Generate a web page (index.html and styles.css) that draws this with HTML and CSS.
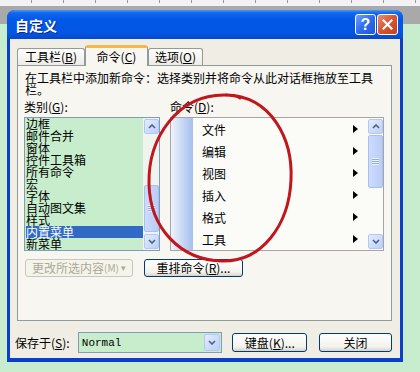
FILE: index.html
```html
<!DOCTYPE html>
<html lang="zh-CN">
<head>
    <meta charset="UTF-8">
    <title>自定义</title>
    <link rel="stylesheet" href="styles.css">
</head>
<body>
    <div class="desk">
        <div class="ruler"></div>
    </div>

    <div class="window">
        <div class="titlebar">
            <span class="title">自定义</span>
            <div class="caption-btns">
                <span class="cap-btn help">?</span>
                <span class="cap-btn close">
                    <svg width="11" height="11" viewBox="0 0 11 11"><path d="M1.5 1.5 L9.5 9.5 M9.5 1.5 L1.5 9.5" stroke="#fff" stroke-width="2.2" stroke-linecap="square"/></svg>
                </span>
            </div>
        </div>

        <div class="client">
            <div class="tabs">
                <div class="tab tab-bars">工具栏(<u>B</u>)</div>
                <div class="tab tab-cmds active">命令(<u>C</u>)</div>
                <div class="tab tab-opts">选项(<u>O</u>)</div>
            </div>

            <div class="panel">
                <p class="hint">在工具栏中添加新命令：选择类别并将命令从此对话框拖放至工具栏。</p>

                <div class="lists">
                    <div class="col col-cat">
                        <div class="label">类别(<u>G</u>):</div>
                        <div class="listbox cat-list">
                            <div class="items">
                                <div class="item">边框</div>
                                <div class="item">邮件合并</div>
                                <div class="item">窗体</div>
                                <div class="item">控件工具箱</div>
                                <div class="item">所有命令</div>
                                <div class="item">宏</div>
                                <div class="item">字体</div>
                                <div class="item">自动图文集</div>
                                <div class="item">样式</div>
                                <div class="item selected">内置菜单</div>
                                <div class="item">新菜单</div>
                            </div>
                            <div class="scrollbar">
                                <div class="sb-btn"><svg width="8" height="5" viewBox="0 0 8 5"><path d="M1 4 L4 1 L7 4" fill="none" stroke="#4d6185" stroke-width="1.6"/></svg></div>
                                <div class="thumb cat-thumb"></div>
                                <div class="sb-btn down"><svg width="8" height="5" viewBox="0 0 8 5"><path d="M1 1 L4 4 L7 1" fill="none" stroke="#4d6185" stroke-width="1.6"/></svg></div>
                            </div>
                        </div>
                    </div>

                    <div class="col col-cmd">
                        <div class="label">命令(<u>D</u>):</div>
                        <div class="listbox cmd-list">
                            <div class="menu">
                                <div class="menu-row">文件<span class="arrow"></span></div>
                                <div class="menu-row">编辑<span class="arrow"></span></div>
                                <div class="menu-row">视图<span class="arrow"></span></div>
                                <div class="menu-row">插入<span class="arrow"></span></div>
                                <div class="menu-row">格式<span class="arrow"></span></div>
                                <div class="menu-row">工具<span class="arrow"></span></div>
                            </div>
                            <div class="scrollbar light">
                                <div class="sb-btn"><svg width="8" height="5" viewBox="0 0 8 5"><path d="M1 4 L4 1 L7 4" fill="none" stroke="#4d6185" stroke-width="1.6"/></svg></div>
                                <div class="thumb cmd-thumb"></div>
                                <div class="sb-btn down"><svg width="8" height="5" viewBox="0 0 8 5"><path d="M1 1 L4 4 L7 1" fill="none" stroke="#4d6185" stroke-width="1.6"/></svg></div>
                            </div>
                        </div>
                    </div>
                </div>

                <div class="actions">
                    <span class="btn disabled modify">更改所选内容<small>(M)</small> <span class="drop">▾</span></span>
                    <span class="btn rearrange">重排命令(<u>R</u>)...</span>
                </div>
            </div>

            <div class="footer">
                <span class="save-label">保存于(<u>S</u>):</span>
                <div class="combo">
                    <span class="combo-text">Normal</span>
                    <span class="combo-btn"><svg width="8" height="5" viewBox="0 0 8 5"><path d="M1 1 L4 4 L7 1" fill="none" stroke="#4d6185" stroke-width="1.6"/></svg></span>
                </div>
                <span class="btn keyboard">键盘(<u>K</u>)...</span>
                <span class="btn close-btn">关闭</span>
            </div>
        </div>
    </div>

    <!-- hand-drawn mark over the command list -->
    <svg class="ink" width="420" height="372" viewBox="0 0 420 372">
        <path d="M226 95 C272 96 293 140 291 180 C289 225 262 262 222 261 C180 260 150 228 149 184 C148 137 178 95 224 95 C232 95 238 96 240 98" fill="none" stroke="#c0171d" stroke-width="3" stroke-linecap="round"/>
    </svg>
</body>
</html>
```

FILE: styles.css
```css
/* page / desktop behind the dialog */
* {
    box-sizing: border-box;
}
body {
    margin: 0;
    width: 420px;
    height: 372px;
    overflow: hidden;
    position: relative;
    background: #c8ecce;
    font-family: "Noto Sans CJK SC", sans-serif;
    font-size: 12px;
    color: #000;
}
u {
    text-decoration: underline;
}
.desk {
    height: 24px;
    background: #a9a9a9;
}
.ruler {
    height: 6px;
    background-color: #f2f2f4;
    background-image: repeating-linear-gradient(to right, transparent 0 31px, #9a9a9a 31px 32px);
    background-size: 100% 3px;
    background-repeat: no-repeat;
    background-position: 0 0;
}

/* dialog window */
.window {
    margin: -14px 0 0 7px;
    width: 396px;
    background: #0a3fcb;
    border-radius: 8px 8px 0 0;
    padding-bottom: 4px;
}
.titlebar {
    height: 29px;
    display: flex;
    align-items: center;
    padding: 0 5px 0 8px;
    border-radius: 8px 8px 0 0;
    background: linear-gradient(to bottom, #4a96fb 0, #1166ee 3px, #0058e6 35%, #0455e3 80%, #0747c9 100%);
}
.title {
    color: #fff;
    font-weight: bold;
    font-size: 14px;
    text-shadow: 1px 1px 0 #0a2a8a;
    flex: 1;
}
.caption-btns {
    display: flex;
    gap: 1px;
}
.cap-btn {
    width: 21px;
    height: 21px;
    border: 1px solid #fff;
    border-radius: 3px;
    display: flex;
    align-items: center;
    justify-content: center;
}
.help {
    background: linear-gradient(135deg, #6fa2fb 0%, #2d6cf0 50%, #1f55d8 100%);
    color: #fff;
    font-family: "Liberation Sans", sans-serif;
    font-weight: bold;
    font-size: 16px;
}
.close {
    background: linear-gradient(135deg, #ee8e6e 0%, #d9532e 50%, #c4421e 100%);
}

.client {
    margin: 0 3px;
    height: 319px;
    background: #efede4;
    padding: 6px 8px 5px 7px;
}

/* tabs */
.tabs {
    height: 20px;
    display: flex;
    align-items: flex-end;
}
.tab {
    height: 17px;
    border: 1px solid #919b9c;
    border-bottom: none;
    border-radius: 3px 3px 0 0;
    background: linear-gradient(#ffffff, #ecebe5);
    display: flex;
    align-items: center;
    justify-content: center;
    line-height: 12px;
}
.tab-bars {
    width: 68px;
}
.tab-cmds {
    width: 63px;
}
.tab-opts {
    width: 55px;
}
.tab.active {
    height: 21px;
    margin-bottom: -1px;
    border-top: 3px solid #f6b84a;
    background: #f7f6f1;
    position: relative;
    z-index: 1;
}

.panel {
    height: 256px;
    border: 1px solid #919b9c;
    background: #f7f6f1;
    padding: 6px 6px 0 6px;
}
.hint {
    margin: 0;
    width: 352px;
    padding-left: 1px;
    line-height: 12px;
}
.lists {
    display: flex;
    gap: 10px;
    margin-top: 5px;
}
.label {
    line-height: 12px;
    margin-bottom: 4px;
}
.col-cat {
    width: 136px;
}
.col-cmd {
    width: 214px;
}
.listbox {
    height: 134px;
    border: 1px solid #7f9db9;
    display: flex;
}
.cat-list {
    background: #c7edcc;
}
.items {
    flex: 1;
    overflow: hidden;
}
.item {
    height: 12px;
    line-height: 12px;
    padding-left: 1px;
    white-space: nowrap;
}
.item.selected {
    background: #316ac5;
    color: #fff;
    margin-left: 1px;
    padding-left: 0;
}

.cmd-list {
    border-color: #a5a5a5;
}
.menu {
    flex: 1;
    background: linear-gradient(to right, #eef3fd, #a6bfee) no-repeat 0 0 / 22px 100%, #fbfbf8;
}
.menu-row {
    height: 22px;
    display: flex;
    align-items: center;
    padding: 0 9px 0 31px;
}
.arrow {
    margin-left: auto;
    width: 0;
    height: 0;
    border-left: 5px solid #000;
    border-top: 4.5px solid transparent;
    border-bottom: 4.5px solid transparent;
}

/* xp scrollbars */
.scrollbar {
    width: 16px;
    display: flex;
    flex-direction: column;
    padding: 1px 0 1px 1px;
    background: #eff5ee;
}
.scrollbar.light {
    background: #fbfbf8;
}
.sb-btn {
    width: 15px;
    height: 15px;
    border: 1px solid #b4c8f6;
    border-radius: 2px;
    background: linear-gradient(135deg, #e3ecfe, #bccffb);
    display: flex;
    align-items: center;
    justify-content: center;
}
.sb-btn.down {
    margin-top: auto;
}
.thumb {
    width: 15px;
    border: 1px solid #a9bfee;
    border-radius: 2px;
    background: linear-gradient(to right, #cddbfc, #b8cdf8);
    display: flex;
    align-items: center;
    justify-content: center;
}
.thumb::after {
    content: "";
    width: 7px;
    height: 7px;
    background: repeating-linear-gradient(#eef4fe 0 1px, #90abe9 1px 2px);
}
.cat-thumb {
    margin-top: 51px;
    height: 47px;
}
.cmd-thumb {
    margin-top: 1px;
    height: 53px;
}

/* buttons */
.actions {
    display: flex;
    gap: 11px;
    margin-top: 8px;
    padding-left: 1px;
}
.btn {
    height: 18px;
    border: 1px solid #003c74;
    border-radius: 3px;
    background: linear-gradient(#ffffff, #f3f2ec 75%, #d8d3c8);
    display: flex;
    align-items: center;
    justify-content: center;
    line-height: 12px;
    white-space: nowrap;
}
.btn.disabled {
    border-color: #c9c7ba;
    background: #f5f4ea;
    color: #aca899;
}
.btn small {
    font-size: 10px;
}
.drop {
    font-size: 9px;
    margin-left: 2px;
}
.modify {
    width: 108px;
}
.rearrange {
    width: 99px;
}

.footer {
    display: flex;
    align-items: center;
    margin: 11px 0 0 -2px;
    height: 21px;
}
.save-label {
    width: 63px;
}
.combo {
    width: 145px;
    height: 21px;
    border: 1px solid #7f9db9;
    background: #c7edcc;
    display: flex;
    align-items: center;
    padding: 0 1px 0 3px;
    margin-right: 10px;
}
.combo-text {
    flex: 1;
    font-family: "Liberation Mono", monospace;
    font-size: 11px;
}
.combo-btn {
    width: 16px;
    height: 17px;
    border: 1px solid #b4c8f6;
    border-radius: 2px;
    background: linear-gradient(135deg, #e3ecfe, #bccffb);
    display: flex;
    align-items: center;
    justify-content: center;
}
.keyboard {
    width: 75px;
    height: 19px;
    margin-right: 12px;
}
.close-btn {
    width: 73px;
    height: 19px;
}

/* red pen mark on top of everything */
.ink {
    position: absolute;
    left: 0;
    top: 0;
    pointer-events: none;
}
```
